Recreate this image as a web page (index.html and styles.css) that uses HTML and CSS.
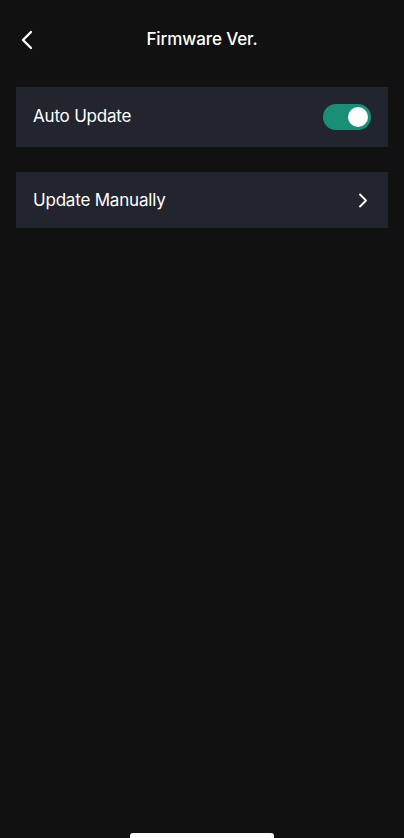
FILE: index.html
```html
<!DOCTYPE html>
<html lang="en">
<head>
<meta charset="utf-8">
<title>Firmware Ver.</title>
<link rel="stylesheet" href="styles.css">
</head>
<body>
<div class="screen">
  <header class="nav">
    <button class="back" aria-label="Back">
      <svg width="14" height="20" viewBox="0 0 14 20"><path d="M11 2 L3 10 L11 18" fill="none" stroke="#ffffff" stroke-width="2.4" stroke-linecap="round" stroke-linejoin="round"/></svg>
    </button>
    <h1 class="title">Firmware Ver.</h1>
    <span></span>
  </header>
  <main class="list">
    <div class="card card-toggle">
      <span class="label">Auto Update</span>
      <span class="switch on"><span class="knob"></span></span>
    </div>
    <div class="card card-link">
      <span class="label">Update Manually</span>
      <svg class="chev" width="10" height="15" viewBox="0 0 10 15"><path d="M2 1.5 L8 7.5 L2 13.5" fill="none" stroke="#ffffff" stroke-width="1.8" stroke-linecap="round" stroke-linejoin="round"/></svg>
    </div>
  </main>
  <div class="home-indicator"></div>
</div>
</body>
</html>
```
FILE: styles.css
```css
html, body {
  margin: 0;
  padding: 0;
  background: #111111;
}
body {
  font-family: Inter, "Noto Sans", "Liberation Sans", sans-serif;
  color: #ffffff;
}
.screen {
  min-height: 838px;
  display: flex;
  flex-direction: column;
  overflow: hidden;
}
.nav {
  height: 78px;
  display: grid;
  grid-template-columns: 1fr auto 1fr;
  align-items: center;
}
.back {
  justify-self: start;
  margin-left: 20px;
  margin-top: 1px;
  padding: 0;
  background: none;
  border: 0;
  display: flex;
}
.title {
  margin: 0;
  font-size: 17px;
  font-weight: 500;
  letter-spacing: -0.1px;
}
.list {
  padding: 9px 16px 0;
  display: flex;
  flex-direction: column;
  gap: 25px;
}
.card {
  background: #22252d;
  display: flex;
  align-items: center;
  justify-content: space-between;
  padding: 0 17px;
}
.card-toggle {
  height: 60px;
}
.card-link {
  height: 56px;
  padding-right: 20px;
}
.label {
  font-size: 17px;
  font-weight: 400;
  letter-spacing: -0.2px;
  margin-top: -3px;
}
.card-link .label {
  margin-top: 0;
}
.switch {
  width: 48px;
  height: 26px;
  border-radius: 13px;
  background: #1a8f78;
  display: flex;
  align-items: center;
  justify-content: flex-end;
  padding: 0 3px;
  box-sizing: border-box;
  margin-top: -1px;
}
.knob {
  width: 20px;
  height: 20px;
  border-radius: 50%;
  background: #ffffff;
}
.chev {
  display: block;
}
.home-indicator {
  margin-top: auto;
  align-self: center;
  width: 144px;
  height: 5px;
  background: #ffffff;
  border-radius: 3px 3px 0 0;
}
```
